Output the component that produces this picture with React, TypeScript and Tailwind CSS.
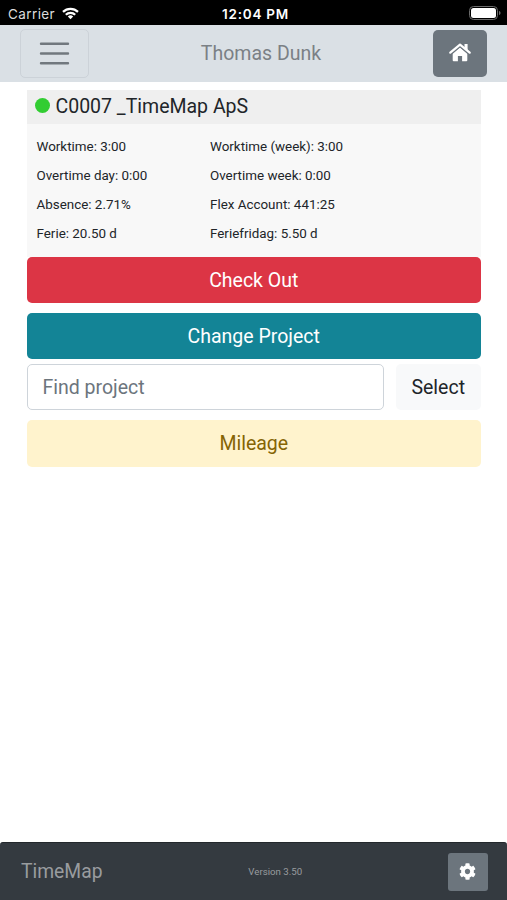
import { FaCog } from 'react-icons/fa';

const stats = [
  { label: 'Worktime', value: '3:00' },
  { label: 'Worktime (week)', value: '3:00' },
  { label: 'Overtime day', value: '0:00' },
  { label: 'Overtime week', value: '0:00' },
  { label: 'Absence', value: '2.71%' },
  { label: 'Flex Account', value: '441:25' },
  { label: 'Ferie', value: '20.50 d' },
  { label: 'Feriefridag', value: '5.50 d' },
];

function StatusBar() {
  return (
    <div className="grid h-[25px] grid-cols-3 items-center bg-black pt-[3px] font-['Inter',sans-serif] text-white">
      <div className="flex items-center gap-[7px] pl-2">
        <span className="text-[13.5px] leading-5 tracking-[0.4px] text-[#dcdcdc]">Carrier</span>
        <svg className="mb-[2px]" width="17" height="13" viewBox="0 0 17 13" fill="none" stroke="white" strokeWidth="2.2">
          <path d="M1 4.900a10.600 10.600 0 0 1 15 0" />
          <path d="M3.800 7.800a6.600 6.600 0 0 1 9.400 0" />
          <path d="M5.800 9.500a3.800 3.800 0 0 1 5.400 0L8.500 12.300z" fill="white" stroke="none" />
        </svg>
      </div>
      <span className="pl-[4px] text-center text-[13.5px] font-semibold leading-5 tracking-[0.75px] whitespace-nowrap">12:04 PM</span>
      <div className="flex justify-end pr-[6px] pb-[2px]">
        <svg width="32" height="14" viewBox="0 0 32 14">
          <rect x="0.5" y="0.5" width="28" height="13" rx="4" fill="none" stroke="#6b6b6b" />
          <rect x="2" y="2" width="25" height="10" rx="2.500" fill="white" />
          <path d="M30 5v4c1-.3 1.500-1 1.500-2S31 5.300 30 5z" fill="#6b6b6b" />
        </svg>
      </div>
    </div>
  );
}

function MenuIcon() {
  return (
    <svg width="31" height="25" viewBox="0 0 31 25" stroke="#71787e" strokeWidth="2.400" strokeLinecap="round">
      <path d="M2 2.800h27M2 12.500h27M2 22.200h27" />
    </svg>
  );
}

function HomeIcon() {
  return (
    <svg width="22" height="19" viewBox="0 0 22 19" fill="white">
      <path d="M11 4.600 18.300 10.800V17.200a1 1 0 0 1-1 1H13.100V13H8.900v5.200H4.700a1 1 0 0 1-1-1V10.800z" />
      <path d="M1.200 9.900 11 1.600l9.800 8.300" fill="none" stroke="#6c757d" strokeWidth="4.200" />
      <path d="M15.500 1h3.100v6.500l-3.100-2.600z" />
      <path d="M1.300 9.700 11 1.600l9.700 8.100" fill="none" stroke="white" strokeWidth="2.200" strokeLinecap="round" strokeLinejoin="round" />
    </svg>
  );
}

export default function App() {
  return (
    <div className="flex h-screen w-full flex-col bg-white font-['Roboto',sans-serif] text-[19.500px] text-[#212529]">
      <StatusBar />

      {/* Header */}
      <header className="flex h-[57px] items-center justify-between bg-[#dae0e5] pr-[20px] pl-5">
        <button className="flex h-[49px] w-[69px] items-center justify-center rounded-[5px] border border-[#ccd2d8]">
          <MenuIcon />
        </button>
        <span className="text-[#7b8085]">Thomas Dunk</span>
        <button className="flex h-[47px] w-[54px] items-center justify-center rounded-[5px] bg-[#6c757d] pb-[3px] text-white">
          <HomeIcon />
        </button>
      </header>

      {/* Main Content */}
      <main className="flex-1 pt-2 pr-[26px] pl-[26.500px]">
        <section className="h-[166.500px] bg-[#f8f8f8]">
          <h1 className="flex h-[34px] items-center gap-[6px] bg-[#efefef] pl-[8px]">
            <span className="mb-[3px] size-[15px] rounded-full bg-[#32cd32]" />
            C0007 _TimeMap ApS
          </h1>
          <div className="grid auto-rows-[29.300px] grid-cols-[173.500px_1fr] items-center pt-[8px] pl-[10px] text-[13.400px]">
            {stats.map((stat) => (
              <span key={stat.label}>
                {stat.label}: {stat.value}
              </span>
            ))}
          </div>
        </section>

        <button className="block h-[46.500px] w-full rounded-[5px] bg-[#dc3545] pt-px text-white">Check Out</button>
        <button className="mt-[9.500px] block h-[46.500px] w-full rounded-[5px] bg-[#138496] pt-px text-white">Change Project</button>
        <div className="mt-[5px] flex gap-3">
          <input
            type="text"
            placeholder="Find project"
            className="h-[46px] w-[357px] rounded-[5px] border border-[#ced4da] bg-white px-[15px] placeholder:text-[#6c757d]"
          />
          <button className="h-[46px] flex-1 rounded-[5px] bg-[#f8f9fa] pt-px">Select</button>
        </div>
        <button className="mt-[10px] block h-[46.500px] w-full rounded-[5px] bg-[#fff3cd] text-[#856404]">Mileage</button>
      </main>

      {/* Footer */}
      <footer className="flex h-[58px] items-center justify-between rounded-t-[3px] border-t border-[#23282c] bg-[#343a40] pr-[19px] pl-[21px] text-[#999c9f]">
        <span className="pt-px text-[19.300px]">TimeMap</span>
        <span className="pt-px text-[9.700px]">Version 3.50</span>
        <button className="flex h-[38px] w-[40px] items-center justify-center rounded-[3px] bg-[#6c757d] pb-px text-white">
          <FaCog size={17} />
        </button>
      </footer>
    </div>
  );
}
